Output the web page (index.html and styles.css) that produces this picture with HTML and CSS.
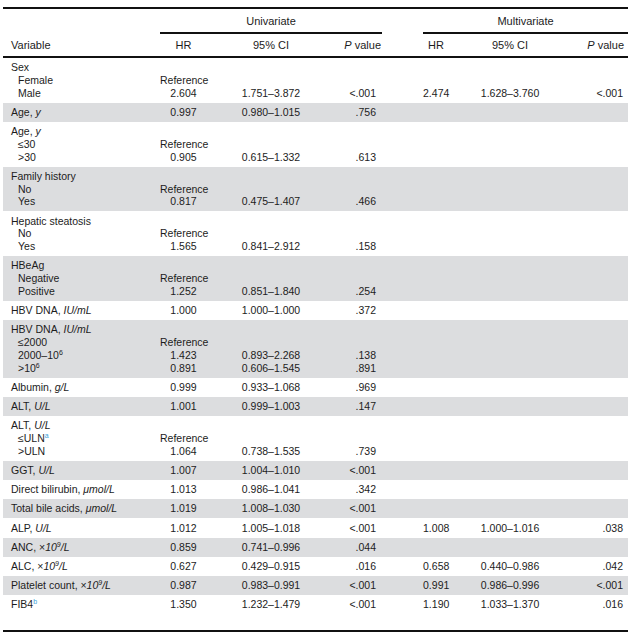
FILE: index.html
```html
<!DOCTYPE html>
<html lang="en">
<head>
  <meta charset="UTF-8" />
  <title>Cox regression</title>
  <link rel="stylesheet" href="styles.css">
</head>
<body>
  <div class="table-wrap">
    <table class="results">
      <colgroup>
        <col class="c-var">
        <col class="c-hr">
        <col class="c-ci">
        <col class="c-p">
        <col class="c-gap">
        <col class="c-hr2">
        <col class="c-ci2">
        <col class="c-p2">
      </colgroup>
      <thead>
        <tr class="group-head">
          <th></th>
          <th colspan="3" class="span">Univariate</th>
          <th></th>
          <th colspan="3" class="span">Multivariate</th>
        </tr>
        <tr class="col-head">
          <th class="var">Variable</th>
          <th>HR</th>
          <th>95% CI</th>
          <th class="p"><i>P</i> value</th>
          <th></th>
          <th>HR</th>
          <th>95% CI</th>
          <th class="p2"><i>P</i> value</th>
        </tr>
      </thead>

      <tbody>
        <tr><td class="var">Sex</td><td></td><td></td><td></td><td></td><td></td><td></td><td></td></tr>
        <tr><td class="var sub">Female</td><td>Reference</td><td></td><td></td><td></td><td></td><td></td><td></td></tr>
        <tr><td class="var sub">Male</td><td>2.604</td><td>1.751–3.872</td><td class="p">&lt;.001</td><td></td><td>2.474</td><td>1.628–3.760</td><td class="p2">&lt;.001</td></tr>
      </tbody>
      <tbody class="shade">
        <tr><td class="var">Age, <i>y</i></td><td>0.997</td><td>0.980–1.015</td><td class="p">.756</td><td></td><td></td><td></td><td></td></tr>
      </tbody>
      <tbody>
        <tr><td class="var">Age, <i>y</i></td><td></td><td></td><td></td><td></td><td></td><td></td><td></td></tr>
        <tr><td class="var sub">≤30</td><td>Reference</td><td></td><td></td><td></td><td></td><td></td><td></td></tr>
        <tr><td class="var sub">&gt;30</td><td>0.905</td><td>0.615–1.332</td><td class="p">.613</td><td></td><td></td><td></td><td></td></tr>
      </tbody>
      <tbody class="shade">
        <tr><td class="var">Family history</td><td></td><td></td><td></td><td></td><td></td><td></td><td></td></tr>
        <tr><td class="var sub">No</td><td>Reference</td><td></td><td></td><td></td><td></td><td></td><td></td></tr>
        <tr><td class="var sub">Yes</td><td>0.817</td><td>0.475–1.407</td><td class="p">.466</td><td></td><td></td><td></td><td></td></tr>
      </tbody>
      <tbody>
        <tr><td class="var">Hepatic steatosis</td><td></td><td></td><td></td><td></td><td></td><td></td><td></td></tr>
        <tr><td class="var sub">No</td><td>Reference</td><td></td><td></td><td></td><td></td><td></td><td></td></tr>
        <tr><td class="var sub">Yes</td><td>1.565</td><td>0.841–2.912</td><td class="p">.158</td><td></td><td></td><td></td><td></td></tr>
      </tbody>
      <tbody class="shade">
        <tr><td class="var">HBeAg</td><td></td><td></td><td></td><td></td><td></td><td></td><td></td></tr>
        <tr><td class="var sub">Negative</td><td>Reference</td><td></td><td></td><td></td><td></td><td></td><td></td></tr>
        <tr><td class="var sub">Positive</td><td>1.252</td><td>0.851–1.840</td><td class="p">.254</td><td></td><td></td><td></td><td></td></tr>
      </tbody>
      <tbody>
        <tr><td class="var">HBV DNA, <i>IU/mL</i></td><td>1.000</td><td>1.000–1.000</td><td class="p">.372</td><td></td><td></td><td></td><td></td></tr>
      </tbody>
      <tbody class="shade">
        <tr><td class="var">HBV DNA, <i>IU/mL</i></td><td></td><td></td><td></td><td></td><td></td><td></td><td></td></tr>
        <tr><td class="var sub">≤2000</td><td>Reference</td><td></td><td></td><td></td><td></td><td></td><td></td></tr>
        <tr><td class="var sub">2000–10<sup>6</sup></td><td>1.423</td><td>0.893–2.268</td><td class="p">.138</td><td></td><td></td><td></td><td></td></tr>
        <tr><td class="var sub">&gt;10<sup>6</sup></td><td>0.891</td><td>0.606–1.545</td><td class="p">.891</td><td></td><td></td><td></td><td></td></tr>
      </tbody>
      <tbody>
        <tr><td class="var">Albumin, <i>g/L</i></td><td>0.999</td><td>0.933–1.068</td><td class="p">.969</td><td></td><td></td><td></td><td></td></tr>
      </tbody>
      <tbody class="shade">
        <tr><td class="var">ALT, <i>U/L</i></td><td>1.001</td><td>0.999–1.003</td><td class="p">.147</td><td></td><td></td><td></td><td></td></tr>
      </tbody>
      <tbody>
        <tr><td class="var">ALT, <i>U/L</i></td><td></td><td></td><td></td><td></td><td></td><td></td><td></td></tr>
        <tr><td class="var sub">≤ULN<sup class="note">a</sup></td><td>Reference</td><td></td><td></td><td></td><td></td><td></td><td></td></tr>
        <tr><td class="var sub">&gt;ULN</td><td>1.064</td><td>0.738–1.535</td><td class="p">.739</td><td></td><td></td><td></td><td></td></tr>
      </tbody>
      <tbody class="shade">
        <tr><td class="var">GGT, <i>U/L</i></td><td>1.007</td><td>1.004–1.010</td><td class="p">&lt;.001</td><td></td><td></td><td></td><td></td></tr>
      </tbody>
      <tbody>
        <tr><td class="var">Direct bilirubin, <i>μmol/L</i></td><td>1.013</td><td>0.986–1.041</td><td class="p">.342</td><td></td><td></td><td></td><td></td></tr>
      </tbody>
      <tbody class="shade">
        <tr><td class="var">Total bile acids, <i>μmol/L</i></td><td>1.019</td><td>1.008–1.030</td><td class="p">&lt;.001</td><td></td><td></td><td></td><td></td></tr>
      </tbody>
      <tbody>
        <tr><td class="var">ALP, <i>U/L</i></td><td>1.012</td><td>1.005–1.018</td><td class="p">&lt;.001</td><td></td><td>1.008</td><td>1.000–1.016</td><td class="p2">.038</td></tr>
      </tbody>
      <tbody class="shade">
        <tr><td class="var">ANC, ×<i>10<sup>9</sup>/L</i></td><td>0.859</td><td>0.741–0.996</td><td class="p">.044</td><td></td><td></td><td></td><td></td></tr>
      </tbody>
      <tbody>
        <tr><td class="var">ALC, ×<i>10<sup>9</sup>/L</i></td><td>0.627</td><td>0.429–0.915</td><td class="p">.016</td><td></td><td>0.658</td><td>0.440–0.986</td><td class="p2">.042</td></tr>
      </tbody>
      <tbody class="shade">
        <tr><td class="var">Platelet count, ×<i>10<sup>9</sup>/L</i></td><td>0.987</td><td>0.983–0.991</td><td class="p">&lt;.001</td><td></td><td>0.991</td><td>0.986–0.996</td><td class="p2">&lt;.001</td></tr>
      </tbody>
      <tbody>
        <tr><td class="var">FIB4<sup class="note">b</sup></td><td>1.350</td><td>1.232–1.479</td><td class="p">&lt;.001</td><td></td><td>1.190</td><td>1.033–1.370</td><td class="p2">.016</td></tr>
      </tbody>
    </table>
  </div>
</body>
</html>
```

FILE: styles.css
```css
:root {
  --text: #1c1c1c;
  --shade: #dcdddf;
  --note: #3b9fd8;
}

* {
  box-sizing: border-box;
  margin: 0;
  padding: 0;
}

body {
  background: #fff;
  color: var(--text);
  font-family: 'Liberation Sans', Arial, sans-serif;
  padding-top: 7px;
}

.table-wrap {
  margin-left: 3px;
  width: 625px;
  border-top: 2px solid #111;
  border-bottom: 2px solid #111;
  padding-bottom: 16px;
}

.results {
  width: 100%;
  border-collapse: collapse;
  table-layout: fixed;
  font-size: 10.5px;
}

.c-var { width: 157px; }
.c-hr { width: 47px; }
.c-ci { width: 128px; }
.c-p { width: 47px; }
.c-gap { width: 41px; }
.c-hr2 { width: 26px; }
.c-ci2 { width: 122px; }
.c-p2 { width: 57px; }

th {
  font-weight: normal;
  font-size: 11px;
  line-height: 13px;
  text-align: center;
  white-space: nowrap;
}

.group-head th {
  padding: 6px 0 4px;
}

.group-head .span {
  border-bottom: 2px solid #111;
}

.col-head th {
  padding: 5px 0 4px;
  border-bottom: 2px solid #111;
}

td {
  line-height: 12.8px;
  text-align: center;
  white-space: nowrap;
  vertical-align: top;
}

tbody tr:first-child td {
  padding-top: 3.2px;
}

tbody tr:last-child td {
  padding-bottom: 3.2px;
}

tbody.shade td {
  background: var(--shade);
}

th.var,
td.var {
  text-align: left;
  padding-left: 8px;
}

td.sub {
  padding-left: 15px;
}

th.p {
  text-align: right;
  padding-right: 1px;
}

td.p {
  text-align: right;
  padding-right: 6px;
}

th.p2 {
  text-align: right;
  padding-right: 4px;
}

td.p2 {
  text-align: right;
  padding-right: 5px;
}

sup {
  font-size: 7px;
  line-height: 0;
  vertical-align: 4px;
}

sup.note {
  color: var(--note);
}
```
